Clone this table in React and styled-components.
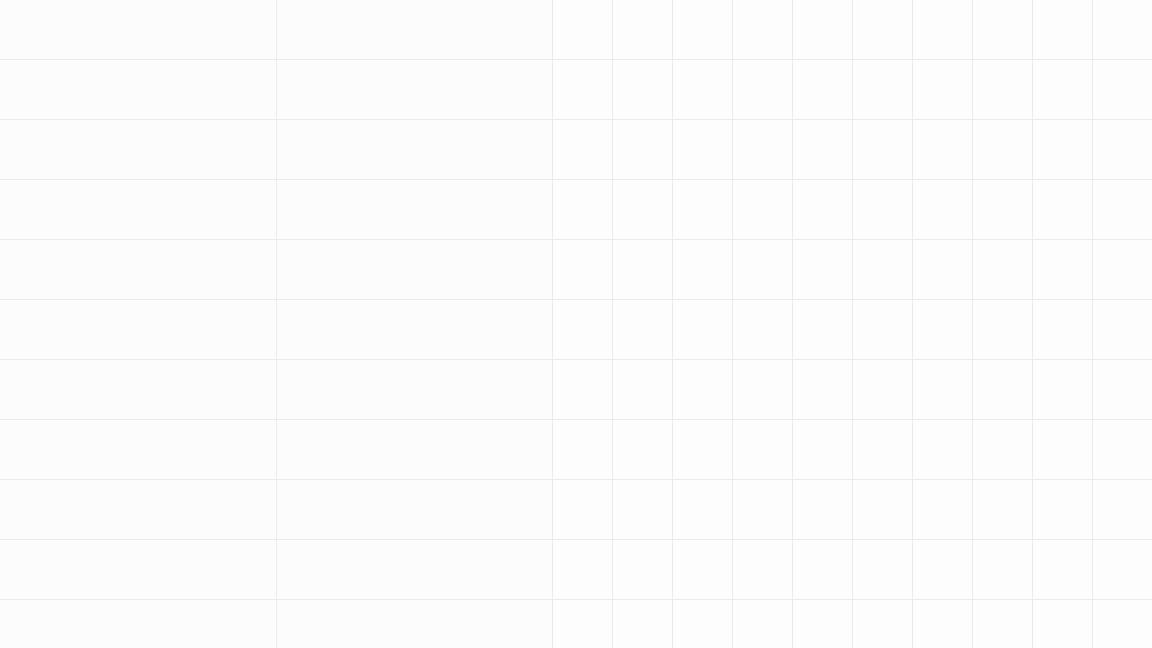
import React from 'react';
import styled, { createGlobalStyle } from 'styled-components';

const GlobalStyle = createGlobalStyle`
  html, body {
    margin: 0;
    padding: 0;
    background: #fcfcfc;
    font-family: "Liberation Sans", Arial, sans-serif;
    overflow: hidden;
  }
`;

// 빈 시트: 열 사이 1px 간격으로 격자선을 그린다
const Sheet = styled.div`
  width: 1152px;
  height: 648px;
  overflow: hidden;
  display: grid;
  grid-template-columns: 276px 275px repeat(10, 59px);
  grid-auto-rows: 59px;
  gap: 1px;
  background: #ebebeb;
`;

const Cell = styled.div`
  background: ${(props) => (props.wide ? '#fcfcfc' : '#fdfdfd')};
`;

const COLS = 12;
const ROWS = 11;

const App = () => {
  const cells = [];
  for (let r = 0; r < ROWS; r++) {
    for (let c = 0; c < COLS; c++) {
      cells.push(<Cell key={`${r}-${c}`} wide={c < 2} />);
    }
  }
  return (
    <>
      <GlobalStyle />
      <Sheet>{cells}</Sheet>
    </>
  );
};

export default App;
